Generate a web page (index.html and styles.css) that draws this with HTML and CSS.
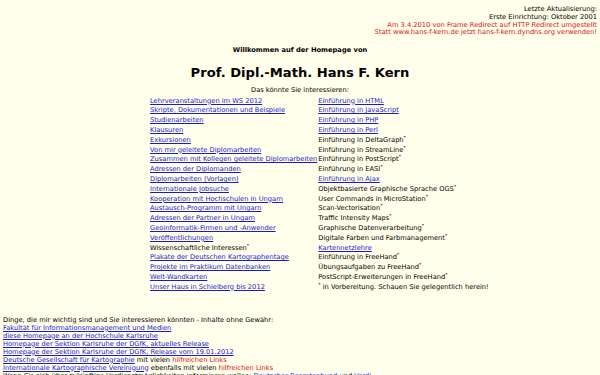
FILE: index.html
```html
<!DOCTYPE html>
<html lang="de">
<head>
  <meta charset="UTF-8">
  <title>Prof. Dipl.-Math. Hans F. Kern</title>
  <link rel="stylesheet" href="styles.css">
</head>
<body>
  <!-- Aktualisierung oben rechts -->
  <div class="update">
    Letzte Aktualisierung:<br>
    Erste Einrichtung: Oktober 2001<br>
    <span class="red">Am 3.4.2010 von Frame Redirect auf HTTP Redirect umgestellt</span><br>
    <span class="red">Statt www.hans-f-kern.de jetzt hans-f-kern.dyndns.org verwenden!</span>
  </div>

  <h5 class="welcome">Willkommen auf der Homepage von</h5>
  <h1 class="name">Prof. Dipl.-Math. Hans F. Kern</h1>
  <p class="intro">Das könnte Sie interessieren:</p>

  <table class="topics">
    <tr><td><a href="#">Lehrveranstaltungen im WS 2012</a></td><td><a href="#">Einführung in HTML</a></td></tr>
    <tr><td><a href="#">Skripte, Dokumentationen und Beispiele</a></td><td><a href="#">Einführung in JavaScript</a></td></tr>
    <tr><td><a href="#">Studienarbeiten</a></td><td><a href="#">Einführung in PHP</a></td></tr>
    <tr><td><a href="#">Klausuren</a></td><td><a href="#">Einführung in Perl</a></td></tr>
    <tr><td><a href="#">Exkursionen</a></td><td>Einführung in DeltaGraph<sup>*</sup></td></tr>
    <tr><td><a href="#">Von mir geleitete Diplomarbeiten</a></td><td>Einführung in StreamLine<sup>*</sup></td></tr>
    <tr><td><a href="#">Zusammen mit Kollegen geleitete Diplomarbeiten</a></td><td>Einführung in PostScript<sup>*</sup></td></tr>
    <tr><td><a href="#">Adressen der Diplomanden</a></td><td>Einführung in EASI<sup>*</sup></td></tr>
    <tr><td><a href="#">Diplomarbeiten (Vorlagen)</a></td><td><a href="#">Einführung in Ajax</a></td></tr>
    <tr><td><a href="#">Internationale Jobsuche</a></td><td>Objektbasierte Graphische Sprache OGS<sup>*</sup></td></tr>
    <tr><td><a href="#">Kooperation mit Hochschulen in Ungarn</a></td><td>User Commands in MicroStation<sup>*</sup></td></tr>
    <tr><td><a href="#">Austausch-Programm mit Ungarn</a></td><td>Scan-Vectorisation<sup>*</sup></td></tr>
    <tr><td><a href="#">Adressen der Partner in Ungarn</a></td><td>Traffic Intensity Maps<sup>*</sup></td></tr>
    <tr><td><a href="#">Geoinformatik-Firmen und -Anwender</a></td><td>Graphische Datenverarbeitung<sup>*</sup></td></tr>
    <tr><td><a href="#">Veröffentlichungen</a></td><td>Digitale Farben und Farbmanagement<sup>*</sup></td></tr>
    <tr><td>Wissenschaftliche Interessen<sup>*</sup></td><td><a href="#">Kartennetzlehre</a></td></tr>
    <tr><td><a href="#">Plakate der Deutschen Kartographentage</a></td><td>Einführung in FreeHand<sup>*</sup></td></tr>
    <tr><td><a href="#">Projekte im Praktikum Datenbanken</a></td><td>Übungsaufgaben zu FreeHand<sup>*</sup></td></tr>
    <tr><td><a href="#">Welt-Wandkarten</a></td><td>PostScript-Erweiterungen in FreeHand<sup>*</sup></td></tr>
    <tr><td><a href="#">Unser Haus in Schielberg bis 2012</a></td><td><sup>*</sup> in Vorbereitung. Schauen Sie gelegentlich herein!</td></tr>
  </table>

  <!-- Linkliste -->
  <div class="links">
    Dinge, die mir wichtig sind und Sie interessieren könnten - Inhalte ohne Gewähr:<br>
    <a href="#">Fakultät für Informationsmanagement und Medien</a><br>
    <a href="#">diese Homepage an der Hochschule Karlsruhe</a><br>
    <a href="#">Homepage der Sektion Karlsruhe der DGfK, aktuelles Release</a><br>
    <a href="#">Homepage der Sektion Karlsruhe der DGfK, Release vom 19.01.2012</a><br>
    <a href="#">Deutsche Gesellschaft für Kartographie</a> mit vielen <span class="red">hilfreichen Links</span><br>
    <a href="#">Internationale Kartographische Vereinigung</a> ebenfalls mit vielen <span class="red">hilfreichen Links</span><br>
    Wenn Sie sich über zukünftige Verdienstmöglichkeiten informieren wollen: <a class="plain" href="#">Deutscher Beamtenbund</a> und <a class="plain" href="#">Verdi</a>
  </div>
</body>
</html>
```

FILE: styles.css
```css
body {
  margin: 3px;
  background-color: #ffffec;
  color: #000;
  font-family: "DejaVu Sans", Verdana, sans-serif;
  font-size: 6.7px;
  line-height: 7.8px;
}

a {
  color: #1a1acc;
}

.red {
  color: #dd1111;
}

sup {
  font-size: 4.5px;
  line-height: 0;
  vertical-align: 3px;
}

.update {
  text-align: right;
  padding-top: 3px;
}

.welcome {
  margin: 10px 0 0;
  font-size: 6.7px;
  text-align: center;
}

.name {
  margin: 9.6px 0 0;
  font-size: 13.1px;
  line-height: 15px;
  text-align: center;
}

.intro {
  margin: 7.6px 0 0;
  text-align: center;
}

.topics {
  margin: 1.6px 0 0 146px;
  border-collapse: collapse;
}

.topics td {
  padding: 0 0 0 1px;
  height: 9.8px;
  white-space: nowrap;
  vertical-align: middle;
}

.links {
  margin-top: 23px;
  line-height: 8px;
}

.links .plain {
  text-decoration: none;
}
```
